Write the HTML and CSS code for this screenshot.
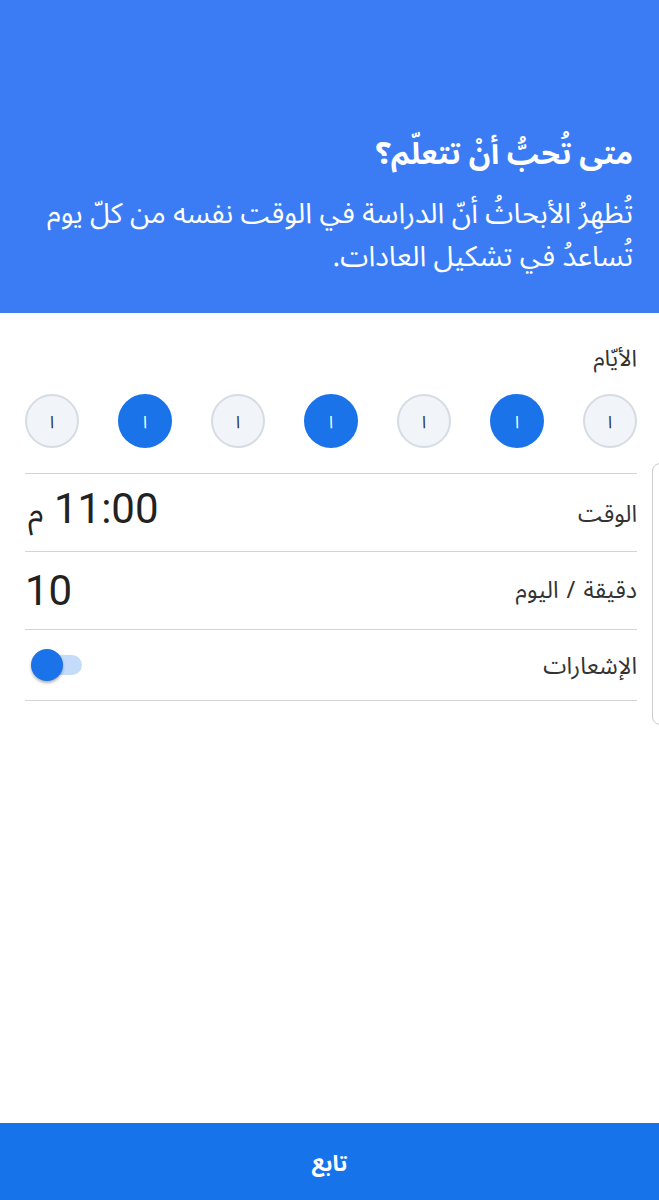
FILE: index.html
```html
<!DOCTYPE html>
<html lang="ar" dir="rtl">
<head>
  <meta charset="UTF-8">
  <title>متى تحب أن تتعلم؟</title>
  <link rel="stylesheet" href="styles.css">
</head>
<body>

<header class="intro">
  <h1>متى تُحبُّ أنْ تتعلّم؟</h1>
  <p>تُظهِرُ الأبحاثُ أنّ الدراسة في الوقت نفسه من كلّ يوم<br>تُساعدُ في تشكيل العادات.</p>
</header>

<main class="settings">
  <div class="days-label">الأيّام</div>
  <div class="days">
    <span class="day">ا</span>
    <span class="day on">ا</span>
    <span class="day">ا</span>
    <span class="day on">ا</span>
    <span class="day">ا</span>
    <span class="day on">ا</span>
    <span class="day">ا</span>
  </div>

  <div class="row">
    <span class="label">الوقت</span>
    <span class="value"><span dir="ltr">11:00</span> <span class="unit">م</span></span>
  </div>
  <div class="row">
    <span class="label">دقيقة / اليوم</span>
    <span class="value">10</span>
  </div>
  <div class="row short">
    <span class="label">الإشعارات</span>
    <span class="toggle"><span class="thumb"></span></span>
  </div>
</main>

<div class="edge"></div>

<button class="next" type="button">تابع</button>

</body>
</html>
```

FILE: styles.css
```css
html, body { margin: 0; padding: 0; }
body {
  width: 659px;
  height: 1200px;
  position: relative;
  background: #fff;
  font-family: "Noto Sans Arabic UI", "Noto Sans Arabic", "DejaVu Sans", sans-serif;
  color: #222;
  display: flex;
  flex-direction: column;
  overflow: hidden;
}

.intro {
  box-sizing: border-box;
  height: 313px;
  background: #3b7cf4;
  color: #fff;
  padding: 130px 26px 0 20px;
}
.intro h1 {
  margin: 0;
  font-size: 30px;
  line-height: 46px;
  font-weight: bold;
}
.intro p {
  margin: 15px 0 0;
  font-size: 28.5px;
  line-height: 43px;
}

.settings {
  flex: 1;
  padding: 0 22px 0 25px;
}
.days-label {
  font-size: 23px;
  line-height: 28px;
  margin-top: 30px;
  color: #333;
}
.days {
  display: flex;
  justify-content: space-between;
  padding: 23px 0 25px;
  border-bottom: 1.5px solid #d4d4d4;
}
.day {
  box-sizing: border-box;
  width: 54px;
  height: 54px;
  border-radius: 50%;
  background: #f1f4f8;
  border: 2px solid #d5dce3;
  display: flex;
  align-items: center;
  justify-content: center;
  font-size: 17px;
  color: #333;
}
.day.on {
  background: #1a73e8;
  border-color: #1a73e8;
  color: #fff;
}

.row {
  height: 77px;
  display: flex;
  align-items: center;
  justify-content: space-between;
  border-bottom: 1.5px solid #d4d4d4;
}
.row.short { height: 70px; }
.label { font-size: 23.5px; color: #333; }
.label { word-spacing: 2px; }
.value {
  font-family: Roboto, "DejaVu Sans", sans-serif;
  font-size: 42px;
  color: #222;
}
.unit {
  font-family: "Noto Sans Arabic", "DejaVu Sans", sans-serif;
  font-size: 32px;
  margin-left: 3px;
}

.toggle {
  position: relative;
  width: 42px;
  height: 20px;
  margin-left: 15px;
  border-radius: 10px;
  background: #c5dbfa;
}
.thumb {
  position: absolute;
  left: -9px;
  top: -6px;
  width: 32px;
  height: 32px;
  border-radius: 50%;
  background: #1a73e8;
  box-shadow: 0 2px 3px rgba(0,0,0,0.3);
}

.edge {
  position: absolute;
  right: -10px;
  top: 463px;
  width: 15px;
  height: 260px;
  border: 1px solid #ccc;
  border-radius: 8px;
}

.next {
  height: 77px;
  border: 0;
  background: #1773ea;
  color: #fff;
  font-family: inherit;
  font-size: 22px;
  font-weight: bold;
}
```
